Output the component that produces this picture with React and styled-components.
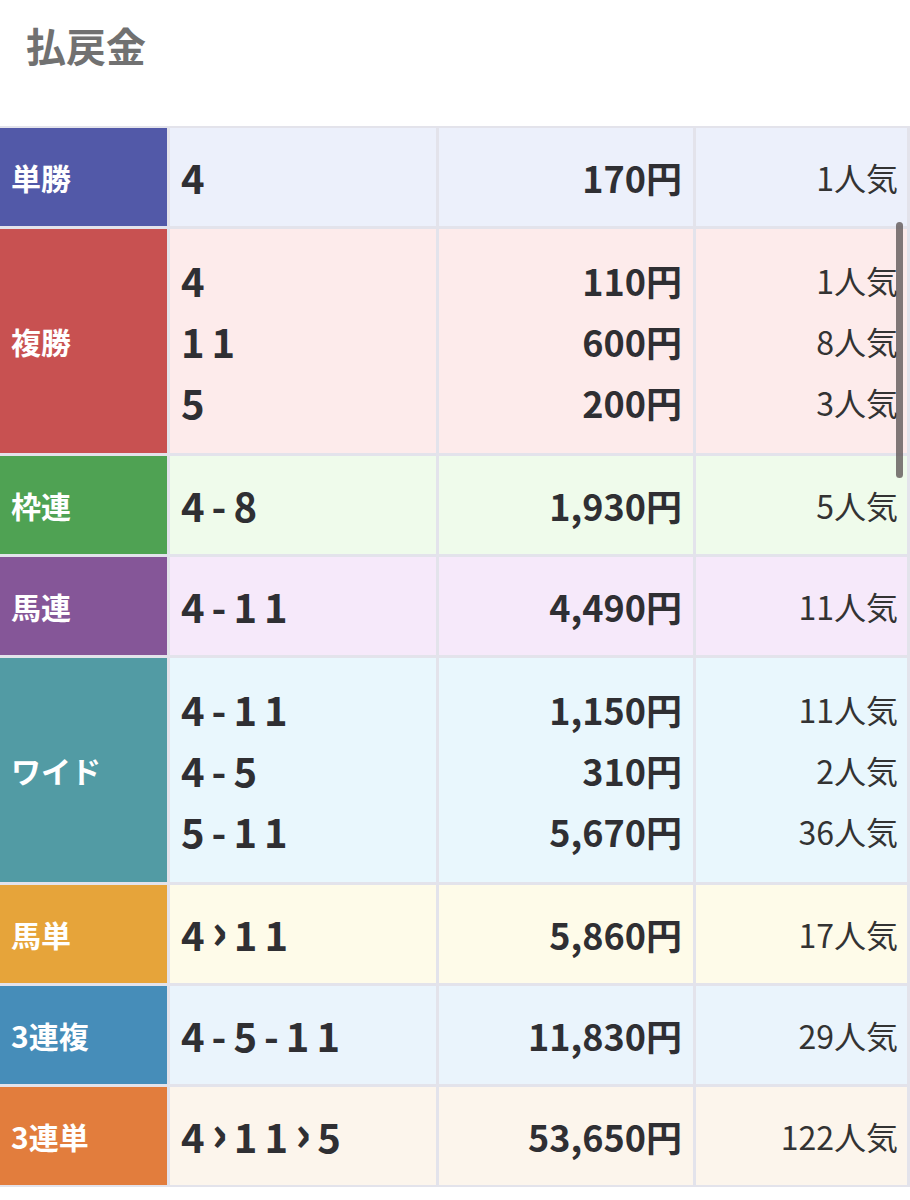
import styled, { createGlobalStyle } from "styled-components";

const GlobalStyle = createGlobalStyle`
  html, body {
    margin: 0;
    padding: 0;
    background: #ffffff;
  }
  body {
    font-family: "Noto Sans CJK JP", "Noto Sans", sans-serif;
    color: #333333;
  }
`;

const payouts = [
  { type: "単勝", color: "#5259a8", bg: "#ecf0fb", rows: [["4", "170円", "1人気"]] },
  {
    type: "複勝",
    color: "#c85151",
    bg: "#fdebeb",
    rows: [
      ["4", "110円", "1人気"],
      ["11", "600円", "8人気"],
      ["5", "200円", "3人気"],
    ],
  },
  { type: "枠連", color: "#4fa253", bg: "#effbeb", rows: [["4-8", "1,930円", "5人気"]] },
  { type: "馬連", color: "#855698", bg: "#f6e9fa", rows: [["4-11", "4,490円", "11人気"]] },
  {
    type: "ワイド",
    color: "#529ba4",
    bg: "#e9f7fd",
    rows: [
      ["4-11", "1,150円", "11人気"],
      ["4-5", "310円", "2人気"],
      ["5-11", "5,670円", "36人気"],
    ],
  },
  { type: "馬単", color: "#e6a43a", bg: "#fefbe9", rows: [["4›11", "5,860円", "17人気"]] },
  { type: "3連複", color: "#468db9", bg: "#eaf4fc", rows: [["4-5-11", "11,830円", "29人気"]] },
  { type: "3連単", color: "#e27d3d", bg: "#fcf5ec", rows: [["4›11›5", "53,650円", "122人気"]] },
];

// 馬単・3連単は着順を › で区切るので、その記号だけ太く大きめに出す
function ComboText({ text }) {
  const parts = text.split("›");
  return parts.map((part, i) => (
    <span key={i}>
      {i > 0 && <Chevron>›</Chevron>}
      {part}
    </span>
  ));
}

export default function App() {
  return (
    <>
      <GlobalStyle />
      <Page>
        <Title>払戻金</Title>
        <Board>
          {payouts.map((p) => (
            <Row key={p.type} $tall={p.rows.length > 1}>
              <Label $color={p.color}>{p.type}</Label>
              <Cell $bg={p.bg}>
                {p.rows.map((r, i) => (
                  <Combo key={i}>
                    <ComboText text={r[0]} />
                  </Combo>
                ))}
              </Cell>
              <Cell $bg={p.bg} $right>
                {p.rows.map((r, i) => (
                  <Amount key={i}>{r[1]}</Amount>
                ))}
              </Cell>
              <Cell $bg={p.bg} $right $pad="9px">
                {p.rows.map((r, i) => (
                  <Popular key={i}>{r[2]}</Popular>
                ))}
              </Cell>
            </Row>
          ))}
        </Board>
        <ScrollThumb />
      </Page>
    </>
  );
}

const Page = styled.div`
  position: relative;
  width: 910px;
  min-height: 1200px;
  background: #ffffff;
`;

const Title = styled.h2`
  margin: 0;
  height: 126px;
  box-sizing: border-box;
  padding: 25px 0 0 26px;
  font-size: 40px;
  line-height: 40px;
  font-weight: 700;
  color: #717171;
`;

const Board = styled.div`
  display: flex;
  flex-direction: column;
  gap: 3px;
  padding: 2px 3px 2px 0;
  background: #e3e3eb;
`;

const Row = styled.div`
  display: grid;
  grid-template-columns: 167px 266px 254px 1fr;
  gap: 3px;
  height: ${(p) => (p.$tall ? "224px" : "98px")};
`;

const Label = styled.div`
  display: flex;
  align-items: center;
  padding-left: 11px;
  background: ${(p) => p.$color};
  color: #ffffff;
  font-size: 30px;
  font-weight: 700;
`;

const Cell = styled.div`
  display: flex;
  flex-direction: column;
  justify-content: center;
  align-items: ${(p) => (p.$right ? "flex-end" : "flex-start")};
  padding: 0 ${(p) => p.$pad || "11px"} 0 11px;
  background: ${(p) => p.$bg};
`;

const Combo = styled.div`
  line-height: 61px;
  font-size: 40px;
  font-weight: 700;
  letter-spacing: 7px;
  color: #2f2f33;
  white-space: nowrap;
`;

const Chevron = styled.span`
  display: inline-block;
  font-size: 48px;
  font-weight: 900;
  line-height: 40px;
  letter-spacing: 6px;
  transform: translateY(-2px);
`;

const Amount = styled.div`
  line-height: 61px;
  font-size: 36px;
  font-weight: 700;
  color: #2f2f33;
`;

const Popular = styled.div`
  line-height: 61px;
  font-size: 32px;
  font-weight: 400;
  color: #333333;
`;

const ScrollThumb = styled.div`
  position: absolute;
  top: 222px;
  right: 7px;
  width: 7px;
  height: 256px;
  border-radius: 4px;
  background: rgba(100, 92, 92, 0.82);
`;
